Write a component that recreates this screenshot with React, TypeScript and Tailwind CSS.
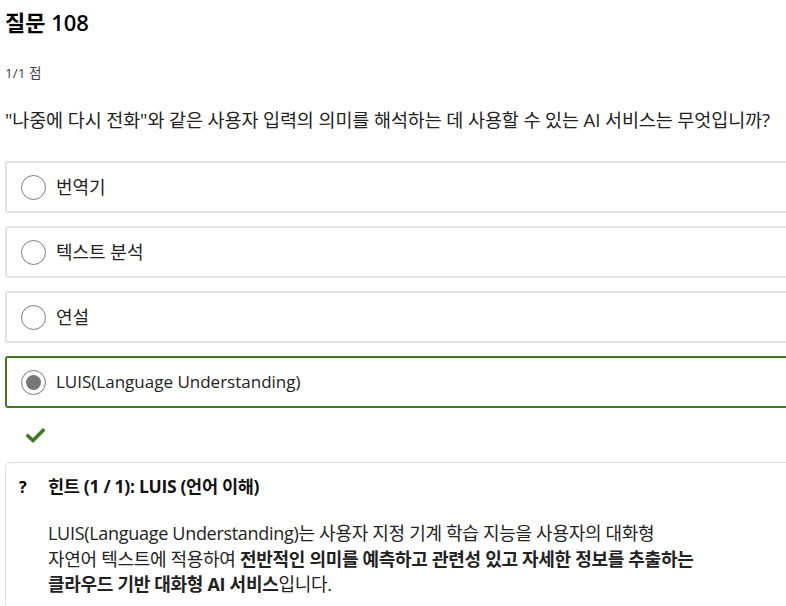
import React from 'react';

const options = [
  { label: '번역기', selected: false, latin: false },
  { label: '텍스트 분석', selected: false, latin: false },
  { label: '연설', selected: false, latin: false },
  { label: 'LUIS(Language Understanding)', selected: true, latin: true },
];

const Radio: React.FC<{ checked: boolean }> = ({ checked }) => (
  <span className="flex h-[25px] w-[25px] shrink-0 items-center justify-center rounded-full border-[1.5px] border-[#7a7a7a] bg-white">
    {checked && <span className="h-[15px] w-[15px] rounded-full bg-[#777777]" />}
  </span>
);

const App: React.FC = () => {
  return (
    <div className="h-[606px] w-[786px] overflow-hidden bg-white text-[#1f1f1f] font-['Open_Sans','Noto_Sans_CJK_KR',sans-serif]">
      <div className="w-[830px] pl-[5px]">
        {/* Header */}
        <h1 className="h-[44px] pt-[6px] text-[22px] font-semibold leading-[32px] text-black">질문 108</h1>
        <div className="mt-[17px] text-[13.5px] leading-[24px] text-[#444]">1/1 점</div>
        <p className="mt-[22px] whitespace-nowrap text-[18.5px] leading-[26px] tracking-[-0.1px] text-[#222]">
          "나중에 다시 전화"와 같은 사용자 입력의 의미를 해석하는 데 사용할 수 있는 AI 서비스는 무엇입니까?
        </p>

        {/* Options */}
        <div className="mt-[28px] flex flex-col gap-[13px]">
          {options.map((o) => (
            <div
              key={o.label}
              className={`flex h-[52px] items-center gap-[10px] rounded-[3px] border-2 pl-[14px] ${
                o.selected ? 'border-[#3b7a1e]' : 'border-[#e3e3e3]'
              }`}
            >
              <Radio checked={o.selected} />
              <span className={`${o.latin ? 'text-[17px]' : 'text-[18px]'} leading-[24px] text-[#222]`}>{o.label}</span>
            </div>
          ))}
        </div>

        {/* Correct check */}
        <div className="mt-[18px] flex h-[18px] items-center pl-[21px]">
          <svg width="19" height="15" viewBox="0 0 19 15">
            <path d="M2 8 L7 12.5 L17 2.5" fill="none" stroke="#3d7a20" strokeWidth="3.6" strokeLinecap="square" />
          </svg>
        </div>

        {/* Hint */}
        <div className="mt-[18px] rounded-[5px] border border-[#e0e0e0] pb-[10px]">
          <div className="flex h-[47px] items-center pl-[13px]">
            <span className="w-[29px] text-[16px] font-bold text-black">?</span>
            <span className="text-[17.5px] font-bold tracking-[-0.3px] text-[#111]">힌트 (1 / 1): LUIS (언어 이해)</span>
          </div>
          <div className="mt-[11px] whitespace-nowrap pl-[42px] text-[18px] leading-[25.5px] tracking-[-0.3px] text-[#222]">
            LUIS(Language Understanding)는 사용자 지정 기계 학습 지능을 사용자의 대화형
            <br />
            자연어 텍스트에 적용하여{' '}
            <b className="font-bold">전반적인 의미를 예측하고 관련성 있고 자세한 정보를 추출하는</b>
            <br />
            <b className="font-bold">클라우드 기반 대화형 AI 서비스</b>입니다.
          </div>
        </div>
      </div>
    </div>
  );
};

export default App;
